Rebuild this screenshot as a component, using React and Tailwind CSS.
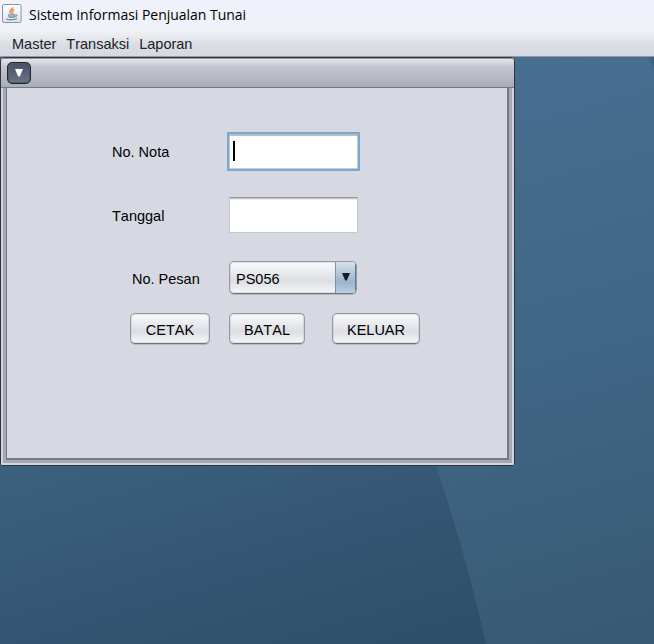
import React from 'react';

function JavaIcon() {
  return (
    <svg className="block shrink-0" width="20" height="20" viewBox="0 0 20 20">
      <defs>
        <linearGradient id="tile" x1="0" y1="0" x2="0" y2="1">
          <stop offset="0" stopColor="#ffffff" />
          <stop offset="1" stopColor="#dce3ea" />
        </linearGradient>
      </defs>
      <rect x="0.5" y="0.5" width="18.6" height="18" rx="1.5" fill="url(#tile)" stroke="#8296a8" />
      <path d="M10.7 3.2C11.4 5 7.6 6 8 7.8c.2.9 1 1.5 1.2 2.3M12.2 5.6C9.8 6.6 9.6 7.4 10.5 8.4c.5.6.2 1.2-.3 1.7" fill="none" stroke="#ec9a5c" strokeWidth="1.7" />
      <path d="M6 10.8h7.2M6.6 11.3c.2 1.3.5 1.8 1.2 2.1h3.7c.8-.3 1.1-1 1.3-2.1M13.4 10.9c2.3-.3 1.6 1.7-.6 2" fill="none" stroke="#7f9bb4" strokeWidth="1.2" />
      <path d="M7.2 12.2h5" stroke="#8fa8bd" strokeWidth="1.4" />
      <path d="M4.3 14.7c1.5 1.4 9 1.4 10.8-.2" fill="none" stroke="#7895af" strokeWidth="1.3" />
    </svg>
  );
}

function Wallpaper() {
  return (
    <svg className="absolute inset-0" width="654" height="587" viewBox="0 57 654 587">
      <defs>
        <linearGradient id="sky" gradientUnits="userSpaceOnUse" x1="500" y1="57" x2="660" y2="644">
          <stop offset="0" stopColor="#466f91" />
          <stop offset="0.5" stopColor="#406686" />
          <stop offset="1" stopColor="#385971" />
        </linearGradient>
        <linearGradient id="shade" gradientUnits="userSpaceOnUse" x1="0" y1="440" x2="88" y2="740">
          <stop offset="0" stopColor="#3d627f" />
          <stop offset="1" stopColor="#2f4e69" />
        </linearGradient>
      </defs>
      <rect y="57" width="654" height="587" fill="url(#sky)" />
      <path d="M0 400H411Q457 514 486 644H0Z" fill="url(#shade)" />
      <path d="M649 57H654V68Z" fill="#3a6187" />
    </svg>
  );
}

function Button({ className, children }) {
  return (
    <button className={`h-[31px] rounded-[5px] border border-[#9699a1] border-b-[#70747d] bg-linear-to-b from-[#fafbfc] via-[#dcdee4] via-60% to-[#f5f7fa] pt-[3px] shadow-[0_1px_0_#b4b7bf,inset_0_0_0_1px_#b9bcc366] ${className}`}>
      {children}
    </button>
  );
}

function FormWindow() {
  return (
    <section className="relative flex h-[409px] w-[515px] flex-col rounded-t-[4px] rounded-b-[3px] border border-[#2f343b] bg-[#d5d8e0]">
      <header className="flex h-[30px] shrink-0 items-start rounded-t-[3px] border-b border-[#747985] bg-linear-to-b from-[#e9eaed] via-[#c4c7cf] via-30% to-[#a8adb8] pt-[4px] pl-[6px] shadow-[inset_0_1px_0_#92969d]">
        <button className="flex h-[22px] w-6 items-center justify-center rounded-[5px] border border-[#20242e] bg-linear-to-b from-[#4a505f] to-[#68748a] shadow-[inset_0_0_0_1px_#525b6c]">
          <svg width="8" height="8" viewBox="0 0 8 8"><path d="M0 0H8L4.8 7.5H3.2Z" fill="#fff" /></svg>
        </button>
      </header>
      <div className="h-[377px] rounded-b-[2px] border-x-2 border-t-0 border-b-2 border-[#d2d5dc]">
        <div className="h-[375px] border-x-[3px] border-b-[3px] border-[#a5a9b4]">
          <main className="h-[372px] w-[503px] border-r-2 border-b-2 border-l border-[#747985] bg-[#d6d9e1] pt-[44px] pl-[105px]">
            <div className="flex h-[39px] items-center">
              <label className="w-[115px]">No. Nota</label>
              <div className="h-[39px] w-[133px] border-2 border-[#78a9d5] bg-white px-1 py-[7px] shadow-[inset_0_2px_1px_#b6b8bd,inset_0_0_0_1px_#c9cbd0]">
                <div className="h-5 w-0.5 bg-black" />
              </div>
            </div>
            <div className="mt-[26px] flex h-9 items-center">
              <label className="w-[117px] pt-0.5">Tanggal</label>
              <div className="h-9 w-[129px] border border-[#c7c8cc] border-t-[#95989e] bg-white shadow-[inset_0_1px_0_#c5c6ca,inset_0_2px_0_#eeeeef]" />
            </div>
            <div className="mt-[28px] ml-5 flex h-[33px] items-center">
              <label className="w-[97px] pt-0.5">No. Pesan</label>
              <div className="flex h-[33px] w-32 overflow-hidden rounded-[5px] border border-[#9699a1] border-b-[#70747d] bg-linear-to-b from-[#fafbfc] via-[#dcdee4] via-60% to-[#f5f7fa] shadow-[0_1px_0_#b4b7bf,inset_0_0_0_1px_#b9bcc366]">
                <div className="flex grow items-center pt-[3px] pl-[6px]">PS056</div>
                <div className="flex w-[21px] justify-center border-l border-[#7794ab] bg-linear-to-b from-[#d5e2ed] via-[#9cb4cb] via-65% to-[#b9d0e5] pt-[11px] shadow-[inset_-1px_0_0_#637b90]">
                  <svg width="8" height="8" viewBox="0 0 8 8"><path d="M0 0H8L4.8 7.5H3.2Z" fill="#191c20" /></svg>
                </div>
              </div>
            </div>
            <div className="mt-[19px] ml-[18px] flex">
              <Button className="w-20">CETAK</Button>
              <Button className="ml-[19px] w-[76px]">BATAL</Button>
              <Button className="ml-[27px] w-[88px]">KELUAR</Button>
            </div>
          </main>
        </div>
      </div>
    </section>
  );
}

export default function App() {
  return (
    <div className="flex h-[644px] w-[654px] flex-col overflow-hidden font-['Liberation_Sans',Arial,sans-serif] text-[14.5px] leading-[18px] text-black [font-kerning:none]">
      <header className="flex h-[29px] shrink-0 items-center gap-[7px] bg-[#eff2fa] pr-2 pb-px pl-[2px]">
        <JavaIcon />
        <h1 className="pt-0.5 font-['Open_Sans','Noto_Sans',sans-serif] text-[14px] tracking-[-0.02px]">Sistem Informasi Penjualan Tunai</h1>
      </header>
      <nav className="flex h-7 shrink-0 items-center gap-[10px] border-b border-[#9299a5] bg-linear-to-b from-[#f4f5f7] via-[#d9dce3] via-60% to-[#d5d9e1] pt-[3px] pl-3 text-[#202126]">
        <span>Master</span><span>Transaksi</span><span>Laporan</span>
      </nav>
      <div className="relative grow">
        <Wallpaper />
        <FormWindow />
      </div>
    </div>
  );
}
